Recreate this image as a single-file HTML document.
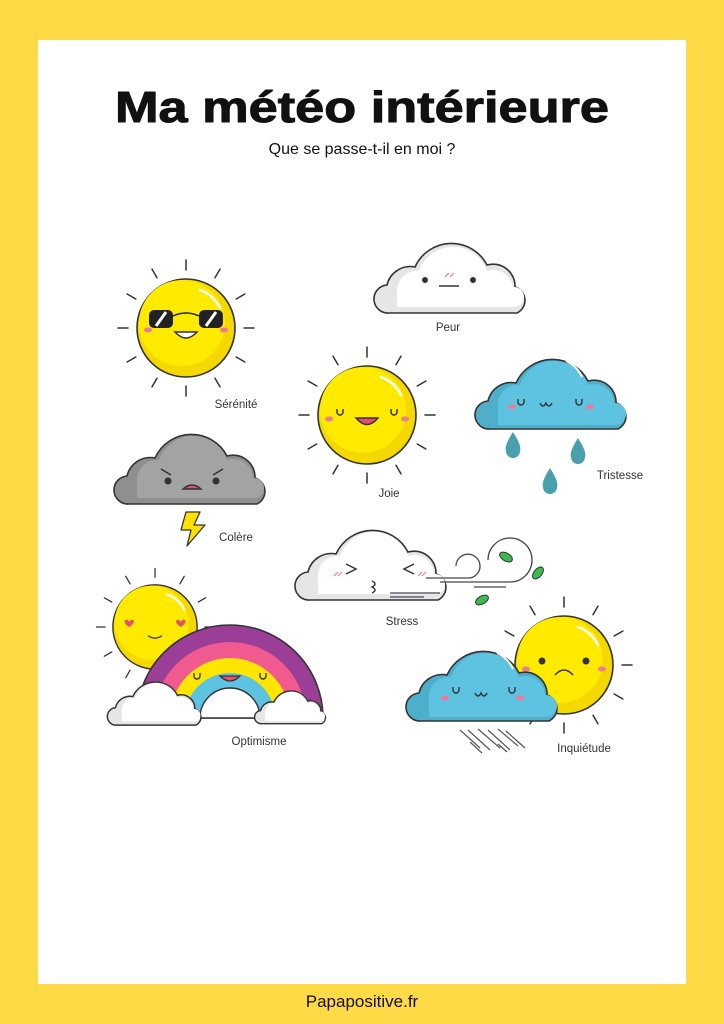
<!DOCTYPE html>
<html><head><meta charset="utf-8"><style>
html,body{margin:0;padding:0;}
body{width:724px;height:1024px;background:#FFDA47;overflow:hidden;}
svg{display:block}
</style></head><body>
<svg width="724" height="1024" viewBox="0 0 724 1024" xmlns="http://www.w3.org/2000/svg">
<defs>
<path id="cl" d="M14 76 A14 14 0 0 1 12 48 A24 24 0 0 1 40 30 A40 40 0 0 1 112 28 A22 22 0 0 1 140 50 A14 14 0 0 1 142 76 Z"/>
<g id="rays" stroke="#333" stroke-width="1.5" stroke-linecap="round">
<line x1="0" y1="-58" x2="0" y2="-68"/>
<line x1="0" y1="-58" x2="0" y2="-68" transform="rotate(30)"/>
<line x1="0" y1="-58" x2="0" y2="-68" transform="rotate(60)"/>
<line x1="0" y1="-58" x2="0" y2="-68" transform="rotate(90)"/>
<line x1="0" y1="-58" x2="0" y2="-68" transform="rotate(120)"/>
<line x1="0" y1="-58" x2="0" y2="-68" transform="rotate(150)"/>
<line x1="0" y1="-58" x2="0" y2="-68" transform="rotate(180)"/>
<line x1="0" y1="-58" x2="0" y2="-68" transform="rotate(210)"/>
<line x1="0" y1="-58" x2="0" y2="-68" transform="rotate(240)"/>
<line x1="0" y1="-58" x2="0" y2="-68" transform="rotate(270)"/>
<line x1="0" y1="-58" x2="0" y2="-68" transform="rotate(300)"/>
<line x1="0" y1="-58" x2="0" y2="-68" transform="rotate(330)"/>
</g>
<g id="sun">
<circle r="49" fill="#F5D800" stroke="#333" stroke-width="1.6"/>
<circle cx="-4" cy="-5" r="43" fill="#FFEA00"/>
<path d="M14 -38 A36 36 0 0 1 34 -20" stroke="#fff" stroke-width="2.5" fill="none" stroke-linecap="round"/>
</g>
</defs>

<rect x="38" y="40" width="648" height="944" fill="#fff"/>

<text x="362" y="122" text-anchor="middle" font-family="Liberation Sans, sans-serif" font-weight="bold" font-size="44" textLength="494" lengthAdjust="spacingAndGlyphs" fill="#111" stroke="#111" stroke-width="1" stroke-linejoin="round">Ma météo intérieure</text>
<text x="362" y="154" text-anchor="middle" font-family="Liberation Sans, sans-serif" font-size="16" fill="#111">Que se passe-t-il en moi ?</text>
<text x="362" y="1007" text-anchor="middle" font-family="Liberation Sans, sans-serif" font-size="17" fill="#111">Papapositive.fr</text>

<g font-family="Liberation Sans, sans-serif" font-size="11.5" fill="#333" text-anchor="middle">
<text x="448" y="331">Peur</text>
<text x="236" y="408">Sérénité</text>
<text x="389" y="497">Joie</text>
<text x="620" y="479">Tristesse</text>
<text x="236" y="541">Colère</text>
<text x="402" y="625">Stress</text>
<text x="259" y="745">Optimisme</text>
<text x="584" y="752">Inquiétude</text>
</g>

<g transform="translate(375,237)">
<use href="#cl" fill="#E6E6E6" stroke="#333" stroke-width="1.6"/>
<path d="M22 70 H140 A10 10 0 0 0 138 50 A20 20 0 0 0 112 34 A36 36 0 0 0 44 34 A20 20 0 0 0 22 54 Z" fill="#fff"/>
<circle cx="50" cy="43" r="3" fill="#333"/><circle cx="98" cy="43" r="3" fill="#333"/>
<line x1="64" y1="49" x2="84" y2="49" stroke="#333" stroke-width="1.5"/>
<path d="M70 40 l4 -4 M75 40 l4 -4" stroke="#F0789A" stroke-width="1.2"/>
</g>

<g transform="translate(186,328)">
<use href="#rays"/><use href="#sun"/>
<rect x="-37" y="-18" width="24" height="18" rx="5" fill="#222"/>
<rect x="13" y="-18" width="24" height="18" rx="5" fill="#222"/>
<path d="M-30 -2 L-20 -16 M20 -2 L30 -16" stroke="#fff" stroke-width="3"/>
<path d="M-13 -12 Q0 -18 13 -12" stroke="#222" stroke-width="1.5" fill="none"/>
<path d="M-11 4 Q0 16 11 4 Z" fill="#fff" stroke="#333" stroke-width="1.5"/>
<ellipse cx="-38" cy="2" rx="4" ry="2.5" fill="#F0789A"/><ellipse cx="38" cy="2" rx="4" ry="2.5" fill="#F0789A"/>
</g>

<g transform="translate(367,415)">
<use href="#rays"/><use href="#sun"/>
<path d="M-30 -6 v3 a3 3 0 0 0 6 0 v-3 M24 -6 v3 a3 3 0 0 0 6 0 v-3" stroke="#333" stroke-width="1.5" fill="none"/>
<path d="M-11 3 H11 Q0 16 -11 3 Z" fill="#E84D6A" stroke="#333" stroke-width="1.4"/>
<ellipse cx="-38" cy="4" rx="4" ry="2.5" fill="#F0789A"/><ellipse cx="38" cy="4" rx="4" ry="2.5" fill="#F0789A"/>
</g>

<g transform="translate(476,353)">
<use href="#cl" fill="#4FAFCB" stroke="#333" stroke-width="1.6"/>
<path d="M22 72 H140 A10 10 0 0 0 138 50 A20 20 0 0 0 112 32 A36 36 0 0 0 44 32 A20 20 0 0 0 22 54 Z" fill="#5EC3E0"/>
<path d="M90 8 A32 32 0 0 1 106 24" stroke="#fff" stroke-width="2" fill="none"/>
<path d="M42 46 v3 a3 3 0 0 0 6 0 v-3 M100 46 v3 a3 3 0 0 0 6 0 v-3 M64 50 q3 6 6 0 q3 6 6 0" stroke="#333" stroke-width="1.4" fill="none"/>
<ellipse cx="36" cy="54" rx="4" ry="2.5" fill="#F0789A"/><ellipse cx="114" cy="54" rx="4" ry="2.5" fill="#F0789A"/>
</g>
<g fill="#4A9FAF">
<path d="M513 432 Q504 446 506 451 A7 7 0 0 0 520 451 Q522 446 513 432 Z"/>
<path d="M578 438 Q569 452 571 457 A7 7 0 0 0 585 457 Q587 452 578 438 Z"/>
<path d="M550 468 Q541 482 543 487 A7 7 0 0 0 557 487 Q559 482 550 468 Z"/>
</g>

<g transform="translate(115,428)">
<use href="#cl" fill="#8F8F8F" stroke="#333" stroke-width="1.6"/>
<path d="M22 70 H140 A10 10 0 0 0 138 50 A20 20 0 0 0 112 32 A36 36 0 0 0 44 32 A20 20 0 0 0 22 54 Z" fill="#A3A3A3"/>
<circle cx="53" cy="53" r="3.5" fill="#333"/><circle cx="101" cy="53" r="3.5" fill="#333"/>
<path d="M46 41 l10 6 M108 41 l-10 6" stroke="#333" stroke-width="1.5"/>
<path d="M68 61 Q77 53 86 61 Z" fill="#E84D6A" stroke="#333" stroke-width="1.4"/>
</g>
<path d="M186 512 H200 L194 525 H205 L187 546 L191 530 H181 Z" fill="#FFE000" stroke="#333" stroke-width="1.3" stroke-linejoin="round"/>

<g transform="translate(296,524)">
<use href="#cl" fill="#E6E6E6" stroke="#333" stroke-width="1.6"/>
<path d="M22 70 H140 A10 10 0 0 0 138 50 A20 20 0 0 0 112 32 A36 36 0 0 0 44 32 A20 20 0 0 0 22 54 Z" fill="#fff"/>
<path d="M50 40 l10 5 l-10 5 M118 40 l-10 5 l10 5 M76 57 q6 3 0 6 q6 3 0 6" stroke="#333" stroke-width="1.5" fill="none"/>
<path d="M38 52 l4 -4 M42 52 l4 -4 M122 52 l4 -4 M126 52 l4 -4" stroke="#F0789A" stroke-width="1.2"/>
</g>
<g stroke="#445" stroke-width="1.3" fill="none">
<path d="M390 593 H440 M390 597 H424"/>
<path d="M426 578 H470 A12 12 0 1 0 456 566"/>
<path d="M440 582 H510 A22 22 0 1 0 488 560"/>
<path d="M474 587 H506"/>
</g>
<g fill="#3DBA4E" stroke="#333" stroke-width="1">
<ellipse cx="506" cy="557" rx="7" ry="4" transform="rotate(30 506 557)"/>
<ellipse cx="538" cy="573" rx="7" ry="4" transform="rotate(-50 538 573)"/>
<ellipse cx="482" cy="600" rx="7" ry="4" transform="rotate(-30 482 600)"/>
</g>

<g transform="translate(155,627) scale(0.86)">
<use href="#rays"/><use href="#sun"/>
<path d="M-30 -6 c-4 -6 -10 0 0 6 c10 -6 4 -12 0 -6 Z M30 -6 c-4 -6 -10 0 0 6 c10 -6 4 -12 0 -6 Z" fill="#E84D6A"/>
<path d="M-8 10 Q0 16 8 10" stroke="#333" stroke-width="1.5" fill="none"/>
</g>
<g transform="translate(230,718)">
<path d="M-93 0 A93 93 0 0 1 93 0 Z" fill="#9B3E98" stroke="#333" stroke-width="1.6"/>
<path d="M-76 0 A76 76 0 0 1 76 0 Z" fill="#F05A8E"/>
<path d="M-60 0 A60 60 0 0 1 60 0 Z" fill="#FFE600"/>
<path d="M-45 0 A45 45 0 0 1 45 0 Z" fill="#5EC3E0"/>
<path d="M-30 0 A30 30 0 0 1 30 0 Z" fill="#fff" stroke="#333" stroke-width="1.4"/>
<path d="M-36 -45 v3 a3 3 0 0 0 6 0 v-3 M30 -45 v3 a3 3 0 0 0 6 0 v-3" stroke="#333" stroke-width="1.4" fill="none"/>
<path d="M-10 -42 H10 Q0 -32 -10 -42 Z" fill="#E84D6A" stroke="#333" stroke-width="1.3"/>
</g>
<g transform="translate(108,678) scale(0.62)">
<use href="#cl" fill="#E6E6E6" stroke="#333" stroke-width="2.4"/>
<path d="M22 70 H140 A10 10 0 0 0 138 50 A20 20 0 0 0 112 32 A36 36 0 0 0 44 32 A20 20 0 0 0 22 54 Z" fill="#fff"/>
</g>
<g transform="translate(255,688) scale(0.47)">
<use href="#cl" fill="#E6E6E6" stroke="#333" stroke-width="3"/>
<path d="M22 70 H140 A10 10 0 0 0 138 50 A20 20 0 0 0 112 32 A36 36 0 0 0 44 32 A20 20 0 0 0 22 54 Z" fill="#fff"/>
</g>

<g transform="translate(564,665)">
<use href="#rays"/><use href="#sun"/>
<circle cx="-22" cy="-4" r="3.5" fill="#333"/><circle cx="22" cy="-4" r="3.5" fill="#333"/>
<path d="M-9 10 Q0 0 9 10" stroke="#333" stroke-width="1.5" fill="none"/>
<ellipse cx="-38" cy="4" rx="4" ry="2.5" fill="#F0789A"/><ellipse cx="38" cy="4" rx="4" ry="2.5" fill="#F0789A"/>
</g>
<g transform="translate(407,645)">
<use href="#cl" fill="#4FAFCB" stroke="#333" stroke-width="1.6"/>
<path d="M22 72 H140 A10 10 0 0 0 138 50 A20 20 0 0 0 112 32 A36 36 0 0 0 44 32 A20 20 0 0 0 22 54 Z" fill="#5EC3E0"/>
<path d="M90 8 A32 32 0 0 1 106 24" stroke="#fff" stroke-width="2" fill="none"/>
<path d="M46 42 v3 a3 3 0 0 0 6 0 v-3 M102 42 v3 a3 3 0 0 0 6 0 v-3 M68 48 q3 6 6 0 q3 6 6 0" stroke="#333" stroke-width="1.4" fill="none"/>
<ellipse cx="38" cy="53" rx="4" ry="2.5" fill="#F0789A"/><ellipse cx="113" cy="53" rx="4" ry="2.5" fill="#F0789A"/>
</g>
<g stroke="#555" stroke-width="1.2">
<line x1="460" y1="730" x2="480" y2="748"/><line x1="468" y1="730" x2="490" y2="750"/>
<line x1="478" y1="729" x2="500" y2="748"/><line x1="488" y1="730" x2="510" y2="750"/>
<line x1="498" y1="729" x2="518" y2="746"/><line x1="506" y1="731" x2="525" y2="748"/>
<line x1="470" y1="742" x2="482" y2="753"/><line x1="498" y1="744" x2="507" y2="752"/>
</g>
</svg>
</body></html>
